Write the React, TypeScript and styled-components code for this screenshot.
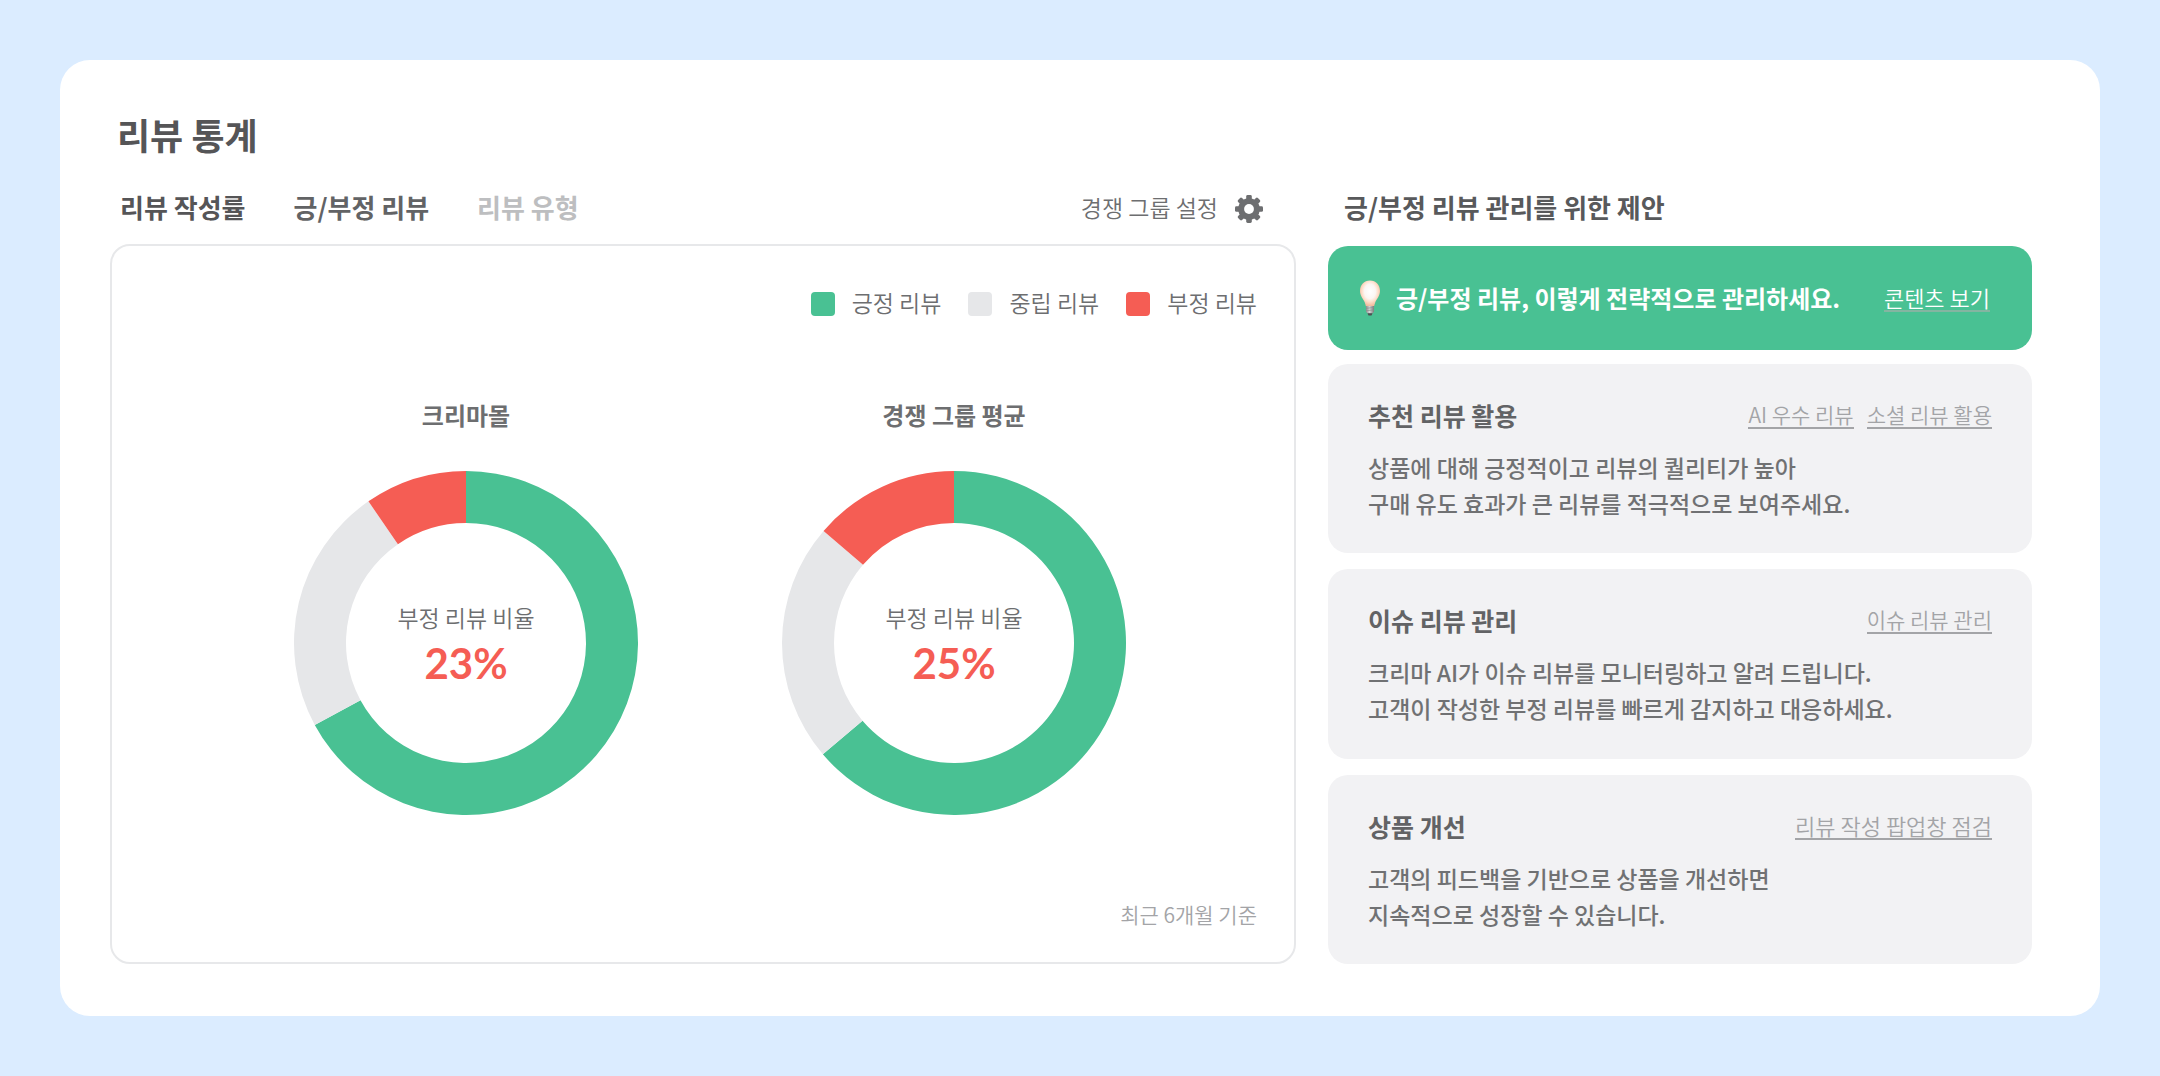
import React from "react";
import styled, { createGlobalStyle } from "styled-components";

const GlobalStyle = createGlobalStyle`
  *, *::before, *::after { box-sizing: border-box; }
  body {
    margin: 0;
    background: #dbecff;
    font-family: "Noto Sans CJK KR", "Noto Sans", sans-serif;
    font-weight: 350;
    color: #58595b;
  }
  h1, h2, h3, p, ul { margin: 0; padding: 0; }
  button { font: inherit; }
`;

const Page = styled.div`
  display: flex;
  min-height: 100vh;
  padding: 60px;
`;

const Board = styled.main`
  flex: 1;
  display: flex;
  flex-direction: column;
  padding: 50px 68px 52px 50px;
  border-radius: 30px;
  background: #fff;
`;

const Title = styled.h1`
  padding: 0 7px;
  font-size: 36px;
  line-height: 48px;
  font-weight: 700;
  color: #555557;
`;

const Columns = styled.div`
  flex: 1;
  display: grid;
  grid-template-columns: minmax(0, 1186fr) minmax(0, 704fr);
  column-gap: 32px;
  margin-top: 25px;
`;

const Column = styled.section`
  display: flex;
  flex-direction: column;
`;

const ColumnHead = styled.div`
  display: flex;
  align-items: center;
  justify-content: space-between;
  height: 48px;
  margin-bottom: 13px;
  padding: 0 33px 0 10px;
`;

const Tabs = styled.div`
  display: flex;
  gap: 48px;
`;

const Tab = styled.button<{ $tone: string }>`
  padding: 0;
  border: 0;
  background: none;
  font-size: 26px;
  line-height: 40px;
  font-weight: 700;
  color: ${(p) => p.$tone};
  cursor: pointer;
`;

const SettingsButton = styled.button`
  display: flex;
  align-items: flex-end;
  gap: 17px;
  padding: 0;
  border: 0;
  background: none;
  font-size: 23px;
  line-height: 32px;
  color: #6d6e70;
  cursor: pointer;
`;

const Panel = styled.div`
  flex: 1;
  display: flex;
  flex-direction: column;
  padding: 42px 37px 28px;
  border: 2px solid #e7e8ea;
  border-radius: 20px;
`;

const Legend = styled.ul`
  display: flex;
  justify-content: flex-end;
  gap: 27px;
  list-style: none;
`;

const LegendItem = styled.li`
  display: flex;
  align-items: flex-end;
  gap: 17px;
  font-size: 23px;
  line-height: 28px;
  color: #6d6e70;
`;

const Swatch = styled.span<{ $color: string }>`
  width: 24px;
  height: 24px;
  border-radius: 4px;
  background: ${(p) => p.$color};
`;

const Charts = styled.div`
  flex: 1;
  display: flex;
  justify-content: center;
  align-items: flex-start;
  gap: 144px;
  padding: 79px 0 0 14px;
`;

const Chart = styled.figure`
  display: flex;
  flex-direction: column;
  align-items: center;
  gap: 36px;
  margin: 0;
`;

const ChartTitle = styled.figcaption`
  font-size: 24px;
  line-height: 40px;
  font-weight: 700;
  color: #6d6e70;
`;

const Ring = styled.div`
  display: grid;
  place-items: center;
  width: 344px;
  height: 344px;
  > * { grid-area: 1 / 1; }
`;

const RingLabel = styled.div`
  display: flex;
  flex-direction: column;
  align-items: center;
  font-size: 23px;
  line-height: 40px;
  color: #6d6e70;
`;

const Rate = styled.strong`
  font-family: Lato, sans-serif;
  font-size: 42px;
  line-height: 52px;
  font-weight: 700;
  color: #f55d54;
`;

const Period = styled.p`
  text-align: right;
  font-size: 21px;
  line-height: 40px;
  color: #a3a4a7;
`;

const SideTitle = styled.h2`
  padding-left: 6px;
  font-size: 26px;
  line-height: 40px;
  font-weight: 700;
`;

const Banner = styled.div`
  display: flex;
  align-items: center;
  height: 104px;
  margin-top: 2px;
  margin-bottom: 14px;
  padding: 0 42px 0 31px;
  border-radius: 20px;
  background: #49c193;
  color: #fff;
`;

const BannerText = styled.p`
  margin-left: 15px;
  font-size: 24px;
  line-height: 40px;
  font-weight: 700;
  white-space: nowrap;
`;

const TextLink = styled.a<{ $size: number }>`
  border-bottom: 2px solid currentColor;
  font-size: ${(p) => p.$size}px;
  line-height: 26px;
  color: #a3a4a7;
  text-decoration: none;
  white-space: nowrap;
`;

const BannerLink = styled(TextLink)`
  margin-left: auto;
  border-bottom-color: #84b5a1;
  color: #fff;
`;

const Cards = styled.div`
  flex: 1;
  display: grid;
  grid-auto-rows: 1fr;
  row-gap: 16px;
`;

const Card = styled.article`
  padding: 31px 40px 28px;
  border-radius: 20px;
  background: #f2f2f4;
`;

const CardHead = styled.div`
  display: flex;
  justify-content: space-between;
  align-items: center;
  margin-bottom: 14px;
`;

const CardTitle = styled.h3`
  font-size: 25px;
  line-height: 40px;
  font-weight: 700;
  color: #626365;
`;

const CardLinks = styled.div`
  display: flex;
  gap: 13px;
`;

const CardText = styled.p`
  font-size: 23px;
  line-height: 36px;
  font-weight: 500;
  color: #707173;
`;

const GREEN = "#49c193";
const GREY = "#e6e7e9";
const RED = "#f55d54";

const legend = [
  { label: "긍정 리뷰", color: GREEN },
  { label: "중립 리뷰", color: GREY },
  { label: "부정 리뷰", color: RED },
];

const tabs = [
  { label: "리뷰 작성률", tone: "#555557" },
  { label: "긍/부정 리뷰", tone: "#626365" },
  { label: "리뷰 유형", tone: "#bdbec0" },
];

const charts = [
  { name: "크리마몰", rate: "23%", parts: [67.1, 23.3, 9.6] },
  { name: "경쟁 그룹 평균", rate: "25%", parts: [63.8, 22.5, 13.7] },
];

const suggestions = [
  {
    title: "추천 리뷰 활용",
    links: ["AI 우수 리뷰", "소셜 리뷰 활용"],
    size: 21,
    lines: ["상품에 대해 긍정적이고 리뷰의 퀄리티가 높아", "구매 유도 효과가 큰 리뷰를 적극적으로 보여주세요."],
  },
  {
    title: "이슈 리뷰 관리",
    links: ["이슈 리뷰 관리"],
    size: 21,
    lines: ["크리마 AI가 이슈 리뷰를 모니터링하고 알려 드립니다.", "고객이 작성한 부정 리뷰를 빠르게 감지하고 대응하세요."],
  },
  {
    title: "상품 개선",
    links: ["리뷰 작성 팝업창 점검"],
    size: 22,
    lines: ["고객의 피드백을 기반으로 상품을 개선하면", "지속적으로 성장할 수 있습니다."],
  },
];

function Donut({ parts }: { parts: number[] }) {
  const colors = [GREEN, GREY, RED];
  const point = (share: number, r: number) => {
    const a = (share / 100) * Math.PI * 2;
    return `${172 + r * Math.sin(a)} ${172 - r * Math.cos(a)}`;
  };
  let start = 0;
  return (
    <svg width="344" height="344" viewBox="0 0 344 344" aria-hidden="true">
      {parts.map((part, i) => {
        const from = start;
        const to = start + part;
        start = to;
        const large = part > 50 ? 1 : 0;
        return (
          <path
            key={colors[i]}
            fill={colors[i]}
            d={`M${point(from, 172)} A172 172 0 ${large} 1 ${point(to, 172)} L${point(to, 120)} A120 120 0 ${large} 0 ${point(from, 120)} Z`}
          />
        );
      })}
    </svg>
  );
}

function GearIcon() {
  return (
    <svg width="28" height="28" viewBox="0 0 28 28" aria-hidden="true">
      <g fill="#6d6e70">
        {[0, 45, 90, 135].map((a) => (
          <rect key={a} x="11.2" y="0" width="5.6" height="28" rx="1.4" transform={`rotate(${a} 14 14)`} />
        ))}
        <circle cx="14" cy="14" r="10.8" />
      </g>
      <circle cx="14" cy="14" r="4.9" fill="#fff" />
    </svg>
  );
}

function BulbIcon() {
  return (
    <svg width="22" height="36" viewBox="0 0 22 36" aria-hidden="true">
      <defs>
        <radialGradient id="bulb" cx="50%" cy="42%" r="56%">
          <stop offset="0" stopColor="#fff" />
          <stop offset="0.5" stopColor="#fbf6f3" />
          <stop offset="0.72" stopColor="#fddfcb" />
          <stop offset="1" stopColor="#f3b99c" />
        </radialGradient>
        <linearGradient id="screw">
          <stop offset="0" stopColor="#8a8d8c" />
          <stop offset="0.45" stopColor="#d5d6d6" />
          <stop offset="1" stopColor="#777a7a" />
        </linearGradient>
      </defs>
      <path d="M11 .5C5 .5 1 5 1 11c0 5 3.200 7.500 4.800 11.500.6 1.600.8 2.800 1.200 4h8c.4-1.200.6-2.400 1.200-4C17.800 18.500 21 16 21 11 21 5 17 .5 11 .5Z" fill="url(#bulb)" />
      <path d="M7 26h8v5.500l-1.500 2h-5L7 31.500Z" fill="url(#screw)" />
      <path d="M7 28.300l8-.8M7 30.700l8-.8" stroke="#8a8d8c" strokeWidth="0.700" />
      <path d="M8.500 33.200h5L12.500 35.500h-3Z" fill="#4d4f50" />
    </svg>
  );
}

export default function App() {
  return (
    <>
      <GlobalStyle />
      <Page>
        <Board>
          <Title>리뷰 통계</Title>
          <Columns>
            <Column>
              <ColumnHead>
                <Tabs>
                  {tabs.map((t) => (
                    <Tab key={t.label} type="button" $tone={t.tone}>{t.label}</Tab>
                  ))}
                </Tabs>
                <SettingsButton type="button">
                  경쟁 그룹 설정
                  <GearIcon />
                </SettingsButton>
              </ColumnHead>
              <Panel>
                <Legend>
                  {legend.map((l) => (
                    <LegendItem key={l.label}>
                      <Swatch $color={l.color} />
                      {l.label}
                    </LegendItem>
                  ))}
                </Legend>
                <Charts>
                  {charts.map((c) => (
                    <Chart key={c.name}>
                      <ChartTitle>{c.name}</ChartTitle>
                      <Ring>
                        <Donut parts={c.parts} />
                        <RingLabel>
                          부정 리뷰 비율
                          <Rate>{c.rate}</Rate>
                        </RingLabel>
                      </Ring>
                    </Chart>
                  ))}
                </Charts>
                <Period>최근 6개월 기준</Period>
              </Panel>
            </Column>
            <Column>
              <ColumnHead>
                <SideTitle>긍/부정 리뷰 관리를 위한 제안</SideTitle>
              </ColumnHead>
              <Banner>
                <BulbIcon />
                <BannerText>긍/부정 리뷰, 이렇게 전략적으로 관리하세요.</BannerText>
                <BannerLink href="#contents" $size={22}>콘텐츠 보기</BannerLink>
              </Banner>
              <Cards>
                {suggestions.map((s) => (
                  <Card key={s.title}>
                    <CardHead>
                      <CardTitle>{s.title}</CardTitle>
                      <CardLinks>
                        {s.links.map((l) => (
                          <TextLink key={l} href="#guide" $size={s.size}>{l}</TextLink>
                        ))}
                      </CardLinks>
                    </CardHead>
                    <CardText>
                      {s.lines[0]}
                      <br />
                      {s.lines[1]}
                    </CardText>
                  </Card>
                ))}
              </Cards>
            </Column>
          </Columns>
        </Board>
      </Page>
    </>
  );
}
